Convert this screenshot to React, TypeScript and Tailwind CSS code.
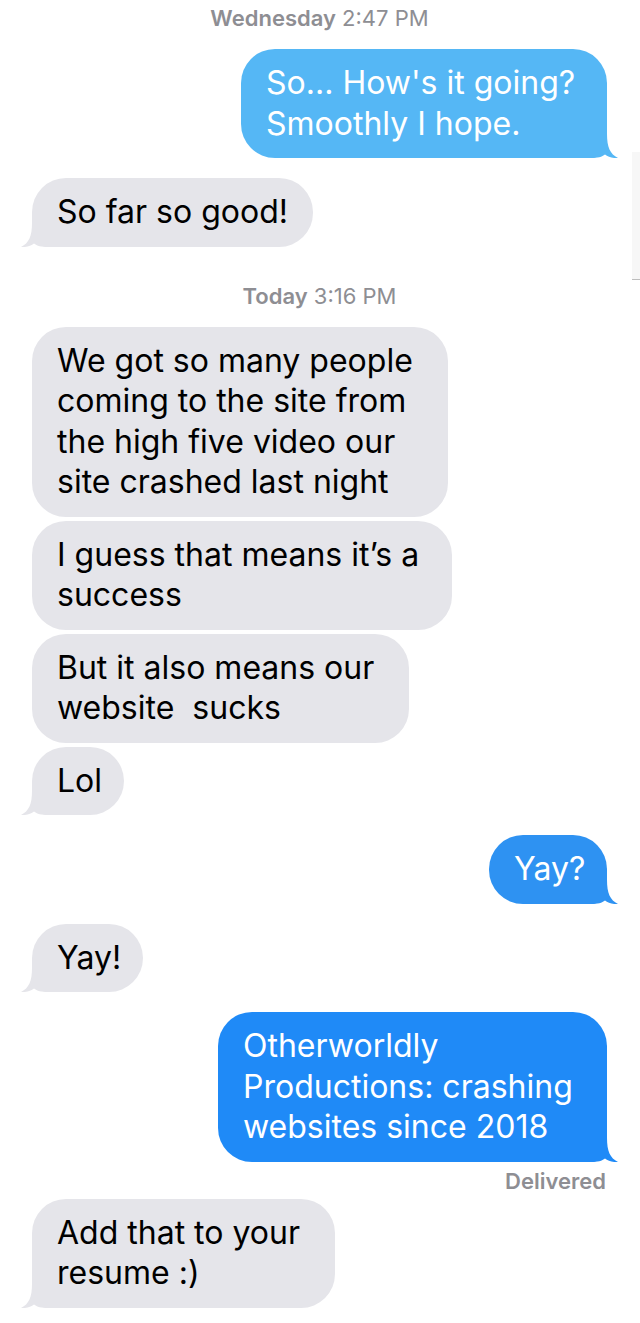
import React from 'react';

type Side = 'left' | 'right';

const Tail = ({ side, color }: { side: Side; color: string }) => (
  <svg
    width="28"
    height="24"
    viewBox="0 0 28 24"
    className={`absolute bottom-0 ${side === 'left' ? 'left-[-11px]' : 'right-[-11px] -scale-x-100'} ${color}`}
  >
    <path
      d="M11 0 C11 13 8 20 0 24 C5 24.5 10 23 13 20.5 C16 23 20 24 28 24 L28 0 Z"
      fill="currentColor"
    />
  </svg>
);

const Bubble = ({
  side,
  bg,
  tailColor,
  width,
  tail,
  className = '',
  children,
}: {
  side: Side;
  bg: string;
  tailColor: string;
  width: string;
  tail?: boolean;
  className?: string;
  children: React.ReactNode;
}) => {
  const corner = tail ? (side === 'left' ? 'rounded-bl-[16px]' : 'rounded-br-[16px]') : '';
  return (
    <div className={`relative ${side === 'right' ? 'self-end' : 'self-start'} ${className}`}>
      <div
        className={`${width} ${bg} ${corner} rounded-[34px] pl-[25px] py-[14px] text-[32px] leading-[40.5px] whitespace-nowrap ${side === 'right' ? 'text-white' : 'text-black'}`}
      >
        {children}
      </div>
      {tail && <Tail side={side} color={tailColor} />}
    </div>
  );
};

const Stamp = ({ day, time, className = '' }: { day: string; time: string; className?: string }) => (
  <div className={`self-center text-[22px] leading-[24px] text-[#8e8e93] ${className}`}>
    <span className="font-semibold">{day}</span> {time}
  </div>
);

const gray = 'bg-[#e5e5ea]';
const grayTail = 'text-[#e5e5ea]';

export default function App() {
  return (
    <div
      className="relative w-full min-h-screen bg-white flex flex-col pl-[32px] pr-[33px] pt-[6px] pb-[16px]"
      style={{ fontFamily: 'Inter, "Noto Sans", sans-serif' }}
    >
      <Stamp day="Wednesday" time="2:47 PM" />

      <Bubble side="right" bg="bg-[#55b7f5]" tailColor="text-[#55b7f5]" width="w-[366px]" tail className="mt-[19px]">
        So... How's it going?
        <br />
        Smoothly I hope.
      </Bubble>

      <Bubble side="left" bg={gray} tailColor={grayTail} width="w-[281px]" tail className="mt-[20px]">
        So far so good!
      </Bubble>

      <Stamp day="Today" time="3:16 PM" className="mt-[37px]" />

      <Bubble side="left" bg={gray} tailColor={grayTail} width="w-[416px]" className="mt-[19px]">
        We got so many people
        <br />
        coming to the site from
        <br />
        the high five video our
        <br />
        site crashed last night
      </Bubble>
      <Bubble side="left" bg={gray} tailColor={grayTail} width="w-[420px]" className="mt-[4px]">
        I guess that means it’s a
        <br />
        success
      </Bubble>
      <Bubble side="left" bg={gray} tailColor={grayTail} width="w-[377px]" className="mt-[4px]">
        But it also means our
        <br />
        website&nbsp; sucks
      </Bubble>
      <Bubble side="left" bg={gray} tailColor={grayTail} width="w-[92px]" tail className="mt-[4px]">
        Lol
      </Bubble>

      <Bubble side="right" bg="bg-[#2e92f2]" tailColor="text-[#2e92f2]" width="w-[118px]" tail className="mt-[20px]">
        Yay?
      </Bubble>

      <Bubble side="left" bg={gray} tailColor={grayTail} width="w-[111px]" tail className="mt-[20px]">
        Yay!
      </Bubble>

      <Bubble side="right" bg="bg-[#1f8af7]" tailColor="text-[#1f8af7]" width="w-[389px]" tail className="mt-[20px]">
        Otherworldly
        <br />
        Productions: crashing
        <br />
        websites since 2018
      </Bubble>

      <div className="self-end mt-[7px] mr-[1px] text-[22px] leading-[24px] font-semibold text-[#8e8e93]">
        Delivered
      </div>

      <Bubble side="left" bg={gray} tailColor={grayTail} width="w-[303px]" tail className="mt-[6px]">
        Add that to your
        <br />
        resume :)
      </Bubble>

      {/* faint scroll indicator on the right edge */}
      <div className="absolute right-0 top-[152px] w-[8px] h-[128px] bg-[#f7f7f7] border-b border-[#bdbdbd]" />
    </div>
  );
}
